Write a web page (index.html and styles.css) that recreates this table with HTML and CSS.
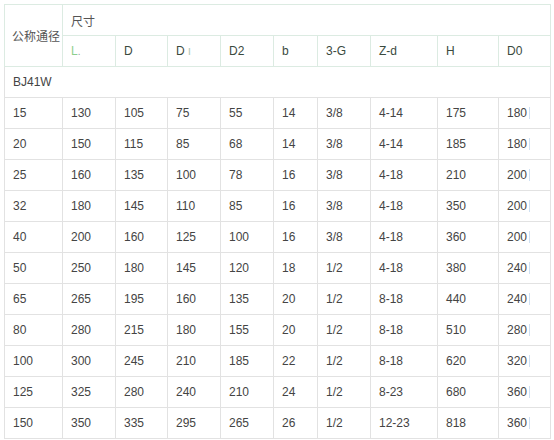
FILE: index.html
```html
<!DOCTYPE html>
<html lang="zh">
<head>
<meta charset="utf-8">
<link rel="stylesheet" href="styles.css">
</head>
<body>
<div class="frame">
<table class="spec">
  <colgroup>
    <col class="c1"><col class="c2"><col class="c3"><col class="c4"><col class="c5">
    <col class="c6"><col class="c7"><col class="c8"><col class="c9"><col class="c10">
  </colgroup>
  <thead>
    <tr>
      <th rowspan="2" class="name">公称通径</th>
      <th colspan="9" class="dim">尺寸</th>
    </tr>
    <tr class="sub">
      <th><span class="lgreen">L</span><span class="dot">.</span></th>
      <th>D</th>
      <th>D<span class="faint">ı</span></th>
      <th>D2</th>
      <th>b</th>
      <th>3-G</th>
      <th>Z-d</th>
      <th>H</th>
      <th>D0</th>
    </tr>
  </thead>
  <tbody>
    <tr><td colspan="10">BJ41W</td></tr>
    <tr><td>15</td><td>130</td><td>105</td><td>75</td><td>55</td><td>14</td><td>3/8</td><td>4-14</td><td>175</td><td>180<span class="caret"></span></td></tr>
    <tr><td>20</td><td>150</td><td>115</td><td>85</td><td>68</td><td>14</td><td>3/8</td><td>4-14</td><td>185</td><td>180<span class="caret"></span></td></tr>
    <tr><td>25</td><td>160</td><td>135</td><td>100</td><td>78</td><td>16</td><td>3/8</td><td>4-18</td><td>210</td><td>200<span class="caret"></span></td></tr>
    <tr><td>32</td><td>180</td><td>145</td><td>110</td><td>85</td><td>16</td><td>3/8</td><td>4-18</td><td>350</td><td>200<span class="caret"></span></td></tr>
    <tr><td>40</td><td>200</td><td>160</td><td>125</td><td>100</td><td>16</td><td>3/8</td><td>4-18</td><td>360</td><td>200<span class="caret"></span></td></tr>
    <tr><td>50</td><td>250</td><td>180</td><td>145</td><td>120</td><td>18</td><td>1/2</td><td>4-18</td><td>380</td><td>240<span class="caret"></span></td></tr>
    <tr><td>65</td><td>265</td><td>195</td><td>160</td><td>135</td><td>20</td><td>1/2</td><td>8-18</td><td>440</td><td>240<span class="caret"></span></td></tr>
    <tr><td>80</td><td>280</td><td>215</td><td>180</td><td>155</td><td>20</td><td>1/2</td><td>8-18</td><td>510</td><td>280<span class="caret"></span></td></tr>
    <tr><td>100</td><td>300</td><td>245</td><td>210</td><td>185</td><td>22</td><td>1/2</td><td>8-18</td><td>620</td><td>320<span class="caret"></span></td></tr>
    <tr><td>125</td><td>325</td><td>280</td><td>240</td><td>210</td><td>24</td><td>1/2</td><td>8-23</td><td>680</td><td>360<span class="caret"></span></td></tr>
    <tr><td>150</td><td>350</td><td>335</td><td>295</td><td>265</td><td>26</td><td>1/2</td><td>12-23</td><td>818</td><td>360<span class="caret"></span></td></tr>
  </tbody>
</table>
</div>
</body>
</html>
```

FILE: styles.css
```css
html, body {
  margin: 0;
  padding: 0;
  background: #ffffff;
}
body {
  font-family: "Liberation Sans", Arial, "Noto Sans CJK SC", sans-serif;
  font-size: 12px;
  color: #444444;
  overflow: hidden;
}
.frame {
  padding: 4px 0 0 4px;
}
.spec {
  border-collapse: collapse;
  table-layout: fixed;
  width: 546px;
  border: 1px solid #e4e4e4;
}
.c1 { width: 58px; }
.c2 { width: 53px; }
.c3 { width: 52px; }
.c4 { width: 53px; }
.c5 { width: 53px; }
.c6 { width: 44px; }
.c7 { width: 53px; }
.c8 { width: 67px; }
.c9 { width: 61px; }
.c10 { width: 52px; }
.spec th, .spec td {
  height: 31px;
  padding: 0 0 0 8px;
  text-align: left;
  vertical-align: middle;
  font-weight: normal;
  white-space: nowrap;
  box-sizing: border-box;
}
.spec td {
  border: 1px solid #e2e2e2;
}
.spec th {
  border: 1px solid #dcebe2;
  color: #404040;
}
.spec .name {
  padding-left: 7px;
  color: #555555;
}
.spec .dim {
  color: #555555;
}
.sub th {
  color: #3a4a3e;
}
.lgreen {
  color: #8ccf8c;
}
.dot {
  color: #999999;
  font-size: 10px;
}
.faint {
  color: #b0c8b4;
  margin-left: 3px;
}
.caret {
  display: inline-block;
  width: 1px;
  height: 12px;
  margin-left: 2px;
  vertical-align: -2px;
  background: #cfe0f2;
}
```
